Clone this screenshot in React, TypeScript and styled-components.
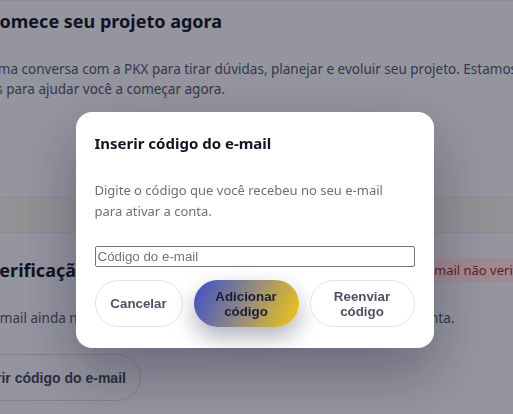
import React from 'react'
import styled, { createGlobalStyle } from 'styled-components'

const GlobalStyle = createGlobalStyle`
    html, body {
        margin: 0;
        padding: 0;
        overflow: hidden;
        background: #e8e7df;
        font-family: 'Noto Sans', 'Open Sans', sans-serif;
    }
`

const Page = styled.div`
    width: 620px;
    margin-left: -12px;
    display: flex;
    flex-direction: column;
    gap: 34px;
`

const Card = styled.section<{ $top: number; $bottom: number }>`
    background: #ecebf0;
    border-top: 1px solid #dcdce2;
    border-bottom: 1px solid #dcdce2;
    padding: ${(p) => p.$top}px 0 ${(p) => p.$bottom}px 0;
    display: flex;
    flex-direction: column;
    align-items: flex-start;
`

const Heading = styled.h2`
    margin: 0;
    font-size: 18px;
    line-height: 28px;
    font-weight: 700;
    color: #0f1222;
`

const HeaderRow = styled.div`
    align-self: stretch;
    display: flex;
    align-items: center;
    justify-content: space-between;
`

const Badge = styled.span`
    background: #fbd9d9;
    color: #a11d1d;
    font-size: 13px;
    line-height: 24px;
    padding: 0 10px;
    margin-right: 48px;
    border-radius: 4px;
`

const Text = styled.p<{ $gap: number }>`
    margin: ${(p) => p.$gap}px 0 0 0;
    font-size: 13.5px;
    line-height: 20px;
    color: #4b5160;
    white-space: nowrap;
`

const OutlineButton = styled.button`
    margin: 26px 0 0 -35px;
    height: 47px;
    padding: 0 14px;
    border-radius: 24px;
    border: 1px solid #c9cbd3;
    background: transparent;
    font-family: 'Liberation Sans', Arial, sans-serif;
    font-weight: 700;
    font-size: 14px;
    color: #3b4150;
`

const Overlay = styled.div`
    position: fixed;
    inset: 0;
    background: rgba(20, 20, 40, 0.4);
    display: flex;
    justify-content: center;
    align-items: flex-start;
    padding-top: 112px;
`

const Modal = styled.div`
    width: 358px;
    box-sizing: border-box;
    margin-left: -4px;
    padding: 21px 19px 21px 19px;
    background: #ffffff;
    border-radius: 16px;
    box-shadow: 0 24px 60px rgba(20, 20, 45, 0.35);
`

const ModalTitle = styled.h3`
    margin: 0;
    font-size: 15px;
    line-height: 20px;
    font-weight: 700;
    color: #111422;
`

const ModalText = styled.p`
    margin: 27px 0 0 0;
    font-size: 13px;
    line-height: 21px;
    color: #6b7080;
`

const CodeInput = styled.input`
    display: block;
    margin-top: 24px;
    width: 100%;
    box-sizing: border-box;
    height: 21px;
    padding: 1px 2px;
    border: 1px solid #767676;
    border-radius: 2px;
    font-family: 'Liberation Sans', Arial, sans-serif;
    font-size: 13.33px;
    color: #222;
    &::placeholder {
        color: #757575;
    }
`

const Actions = styled.div`
    margin-top: 13px;
    display: flex;
    gap: 10px;
    justify-content: space-between;
`

const PillButton = styled.button<{ $w: number; $primary?: boolean }>`
    width: ${(p) => p.$w}px;
    height: 47px;
    padding: 0 8px;
    border-radius: 24px;
    font-family: 'Liberation Sans', Arial, sans-serif;
    font-weight: 700;
    font-size: 13.33px;
    line-height: 15px;
    cursor: pointer;
    border: ${(p) => (p.$primary ? 'none' : '1px solid #dfe2ea')};
    background: ${(p) =>
        p.$primary
            ? 'linear-gradient(115deg, #3d4ec8 0%, #938b80 50%, #f6c70f 100%)'
            : '#ffffff'};
    color: ${(p) => (p.$primary ? '#1b1d38' : '#4d5363')};
    box-shadow: ${(p) => (p.$primary ? '0 10px 22px rgba(30, 30, 60, 0.35)' : 'none')};
`

const App = () => {
    return (
        <>
            <GlobalStyle />
            <Page>
                <Card $top={6} $bottom={98}>
                    <Heading>Comece seu projeto agora</Heading>
                    <Text $gap={24}>
                        Uma conversa com a PKX para tirar dúvidas, planejar e evoluir seu projeto. Estamos
                        <br />
                        os para ajudar você a começar agora.
                    </Text>
                </Card>
                <Card $top={23} $bottom={40}>
                    <HeaderRow>
                        <Heading>Verificação de e-mail</Heading>
                        <Badge>E-mail não verificado</Badge>
                    </HeaderRow>
                    <Text $gap={24}>
                        E-mail ainda não foi verificado. Confirme o código para ativar a sua conta.
                    </Text>
                    <OutlineButton>Inserir código do e-mail</OutlineButton>
                </Card>
            </Page>
            <Overlay>
                <Modal>
                    <ModalTitle>Inserir código do e-mail</ModalTitle>
                    <ModalText>
                        Digite o código que você recebeu no seu e-mail
                        <br />
                        para ativar a conta.
                    </ModalText>
                    <CodeInput placeholder="Código do e-mail" />
                    <Actions>
                        <PillButton $w={88}>Cancelar</PillButton>
                        <PillButton $w={105} $primary>
                            Adicionar
                            <br />
                            código
                        </PillButton>
                        <PillButton $w={105}>
                            Reenviar
                            <br />
                            código
                        </PillButton>
                    </Actions>
                </Modal>
            </Overlay>
        </>
    )
}

export default App
